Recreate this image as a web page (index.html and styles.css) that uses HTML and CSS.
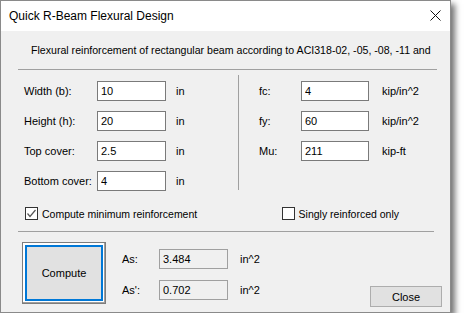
FILE: index.html
```html
<!DOCTYPE html>
<html lang="en">

<head>
    <meta charset="UTF-8">
    <meta name="viewport" content="width=device-width, initial-scale=1.0">
    <title>Quick R-Beam Flexural Design</title>
    <link rel="stylesheet" href="styles.css">
</head>

<body>
    <div class="window">
        <div class="titlebar">
            <span class="title">Quick R-Beam Flexural Design</span>
            <svg class="close-x" width="11" height="11" viewBox="0 0 11 11">
                <path d="M0.5 0.5 L10.5 10.5 M10.5 0.5 L0.5 10.5" stroke="#111" stroke-width="1" fill="none" />
            </svg>
        </div>

        <div class="dialog">
            <p class="intro">Flexural reinforcement of rectangular beam according to ACI318-02, -05, -08, -11 and</p>
            <div class="sep"></div>

            <div class="fields">
                <div class="col col-left">
                    <div class="row"><label>Width (b):</label><input class="box" value="10"><span class="unit">in</span></div>
                    <div class="row"><label>Height (h):</label><input class="box" value="20"><span class="unit">in</span></div>
                    <div class="row"><label>Top cover:</label><input class="box" value="2.5"><span class="unit">in</span></div>
                    <div class="row"><label>Bottom cover:</label><input class="box" value="4"><span class="unit">in</span></div>
                </div>
                <div class="divider"></div>
                <div class="col col-right">
                    <div class="row"><label>fc:</label><input class="box" value="4"><span class="unit">kip/in^2</span></div>
                    <div class="row"><label>fy:</label><input class="box" value="60"><span class="unit">kip/in^2</span></div>
                    <div class="row"><label>Mu:</label><input class="box" value="211"><span class="unit">kip-ft</span></div>
                </div>
            </div>

            <div class="checks">
                <div class="check">
                    <span class="tick">
                        <svg width="11" height="11" viewBox="0 0 11 11">
                            <path d="M1.5 5.5 L4 8.5 L9.5 2" stroke="#555" stroke-width="1.2" fill="none" />
                        </svg>
                    </span>
                    Compute minimum reinforcement
                </div>
                <div class="check check-right"><span class="tick"></span>Singly reinforced only</div>
            </div>
            <div class="sep sep2"></div>

            <div class="results">
                <button class="compute"><span>Compute</span></button>
                <div class="outputs">
                    <div class="row"><label>As:</label><span class="box readonly">3.484</span><span class="unit">in^2</span></div>
                    <div class="row"><label>As':</label><span class="box readonly">0.702</span><span class="unit">in^2</span></div>
                </div>
                <button class="close-btn">Close</button>
            </div>
        </div>
    </div>
</body>

</html>
```

FILE: styles.css
```css
* {
    margin: 0;
    padding: 0;
    box-sizing: border-box;
}

body {
    background-color: #fff;
    font-family: "Liberation Sans", Arial, sans-serif;
    font-size: 11px;
    color: #000;
}

.window {
    width: 451px;
    height: 313px;
    border: 1px solid #8a8a8a;
    background-color: #f0f0f0;
    box-shadow: 4px 4px 6px rgba(0, 0, 0, 0.55);
    display: flex;
    flex-direction: column;
}

.titlebar {
    height: 30px;
    background-color: #fff;
    display: flex;
    align-items: center;
    justify-content: space-between;
    padding: 0 9px 0 8px;
}

.title {
    font-size: 12px;
    padding-bottom: 1px;
}

.close-x {
    margin-bottom: 2px;
}

.dialog {
    flex: 1;
    display: flex;
    flex-direction: column;
}

.intro {
    padding: 12px 0 0 30px;
    line-height: 14px;
    font-size: 10.6px;
}

.sep {
    height: 1px;
    margin: 12px 13px 0 17px;
    background-color: #a0a0a0;
}

.fields {
    display: flex;
    padding-top: 11px;
}

.col .row {
    display: flex;
    align-items: center;
    height: 20px;
    margin-bottom: 10px;
}

.col-left {
    padding-left: 23px;
    width: 237px;
}

.col-left label {
    width: 73px;
}

.divider {
    width: 1px;
    height: 115px;
    margin-top: -6px;
    background-color: #a0a0a0;
}

.col-right {
    padding-left: 20px;
}

.col-right label {
    width: 42px;
}

.box {
    width: 69px;
    height: 20px;
    border: 1px solid #7a7a7a;
    background-color: #fff;
    font-family: "Liberation Sans", Arial, sans-serif;
    font-size: 11px;
    padding: 0 3px;
    outline: none;
}

.col-right .box {
    width: 68px;
}

.unit {
    margin-left: 10px;
}

.col-right .unit {
    margin-left: 13px;
}

.checks {
    display: flex;
    align-items: center;
    margin-top: 6px;
    padding-left: 24px;
    font-size: 10.5px;
}

.check {
    display: flex;
    align-items: center;
    gap: 4px;
}

.check-right {
    margin-left: auto;
    margin-right: 51px;
}

.tick {
    width: 13px;
    height: 13px;
    border: 1px solid #333;
    background-color: #fff;
    display: flex;
    align-items: center;
    justify-content: center;
}

.sep2 {
    margin-top: 11px;
    margin-right: 16px;
}

.results {
    display: flex;
    padding: 10px 0 0 21px;
}

.compute {
    width: 84px;
    height: 62px;
    border: 1px solid #7d7d7d;
    background-color: #fff;
    padding: 2px;
    font-family: "Liberation Sans", Arial, sans-serif;
    font-size: 11px;
    box-shadow: inset -1px -1px 0 #a0a0a0;
}

.compute span {
    display: flex;
    height: 100%;
    align-items: center;
    justify-content: center;
    border: 2px solid #0078d7;
    background-color: #e1e1e1;
}

.outputs {
    padding: 7px 0 0 16px;
}

.outputs .row {
    display: flex;
    align-items: center;
    height: 20px;
    margin-bottom: 11px;
}

.outputs label {
    width: 37px;
}

.readonly {
    width: 69px;
    height: 20px;
    line-height: 18px;
    background-color: #f0f0f0;
    border-color: #a0a0a0;
}

.outputs .unit {
    margin-left: 12px;
}

.close-btn {
    margin: 44px 8px 0 auto;
    width: 72px;
    height: 21px;
    border: 1px solid #adadad;
    background-color: #e1e1e1;
    font-family: "Liberation Sans", Arial, sans-serif;
    font-size: 11px;
}
```
